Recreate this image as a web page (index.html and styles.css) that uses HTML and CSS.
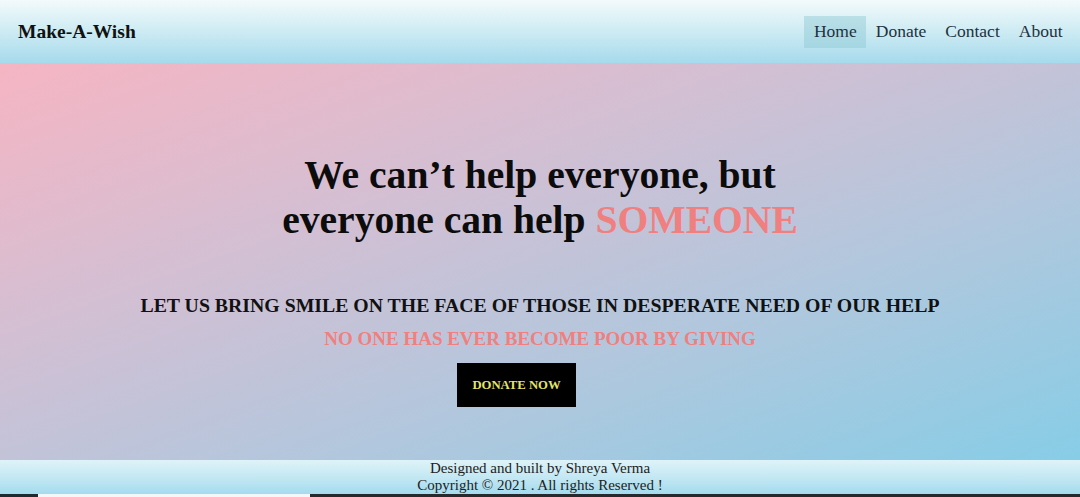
FILE: index.html
```html
<!DOCTYPE html>
<html>
<head>
<meta charset="utf-8">
<link rel="stylesheet" href="styles.css">
</head>
<body>
<header class="topbar">
  <div class="brand">Make-A-Wish</div>
  <nav class="nav">
    <a class="nav-link active" href="#">Home</a>
    <a class="nav-link" href="#">Donate</a>
    <a class="nav-link" href="#">Contact</a>
    <a class="nav-link" href="#">About</a>
  </nav>
</header>
<main class="hero">
  <h1 class="headline">We can’t help everyone, but<br>everyone can help <span class="accent">SOMEONE</span></h1>
  <h2 class="tagline">LET US BRING SMILE ON THE FACE OF THOSE IN DESPERATE NEED OF OUR HELP</h2>
  <h3 class="subtag">NO ONE HAS EVER BECOME POOR BY GIVING</h3>
  <a class="donate-btn" href="#">DONATE NOW</a>
</main>
<footer class="footer">
  <p class="foot-line">Designed and built by Shreya Verma</p>
  <p class="foot-line">Copyright © 2021 . All rights Reserved !</p>
</footer>
<div class="strip">
  <span class="strip-a"></span><span class="strip-b"></span><span class="strip-c"></span>
</div>
</body>
</html>
```
FILE: styles.css
```css
* { box-sizing: border-box; }
html, body { margin: 0; padding: 0; }
body {
  font-family: "Liberation Serif", "Times New Roman", serif;
  width: 1080px;
  height: 497px;
  overflow: hidden;
  display: flex;
  flex-direction: column;
}
.topbar {
  height: 63px;
  flex: none;
  display: flex;
  align-items: center;
  justify-content: space-between;
  padding: 0 8px 0 18px;
  background: linear-gradient(180deg, #f3fafb 0%, #cdebf3 50%, #a6daec 100%);
}
.brand {
  font-weight: bold;
  font-size: 19.5px;
  color: #111;
}
.nav {
  display: flex;
  align-items: center;
}
.nav-link {
  font-size: 17.5px;
  color: #1e3140;
  text-decoration: none;
  padding: 5px 9.5px 6px;
}
.nav-link.active {
  background: rgba(140, 200, 210, 0.45);
}
.hero {
  flex: 1;
  display: flex;
  flex-direction: column;
  align-items: center;
  background: linear-gradient(160deg, #f6b5c3 0%, #d3bfd3 35%, #b2c7dd 65%, #87cde6 100%);
  padding-top: 90px;
}
.headline {
  margin: 0;
  font-size: 39.6px;
  line-height: 45px;
  text-align: center;
  color: #0c0c0c;
}
.accent { color: #f08080; }
.tagline {
  margin: 50px 0 0;
  font-size: 19.8px;
  line-height: 24px;
  color: #111;
}
.subtag {
  margin: 11px 0 0;
  font-size: 19px;
  line-height: 22px;
  color: #f08080;
}
.donate-btn {
  margin: 13px 47px 0 0;
  width: 119px;
  height: 44px;
  display: flex;
  align-items: center;
  justify-content: center;
  background: #000;
  color: #e4e46a;
  font-weight: bold;
  font-size: 12.7px;
  text-decoration: none;
}
.footer {
  height: 34px;
  flex: none;
  display: flex;
  flex-direction: column;
  align-items: center;
  justify-content: center;
  background: linear-gradient(180deg, #def3f8 0%, #c4e8f3 50%, #a4dbee 100%);
}
.foot-line {
  margin: 0;
  font-size: 15px;
  line-height: 17px;
  color: #222;
}
.strip {
  height: 3px;
  flex: none;
  display: flex;
}
.strip-a { width: 38px; background: #1d2a30; }
.strip-b { width: 272px; background: #f4f7f8; }
.strip-c { flex: 1; background: #262a2c; }
```
